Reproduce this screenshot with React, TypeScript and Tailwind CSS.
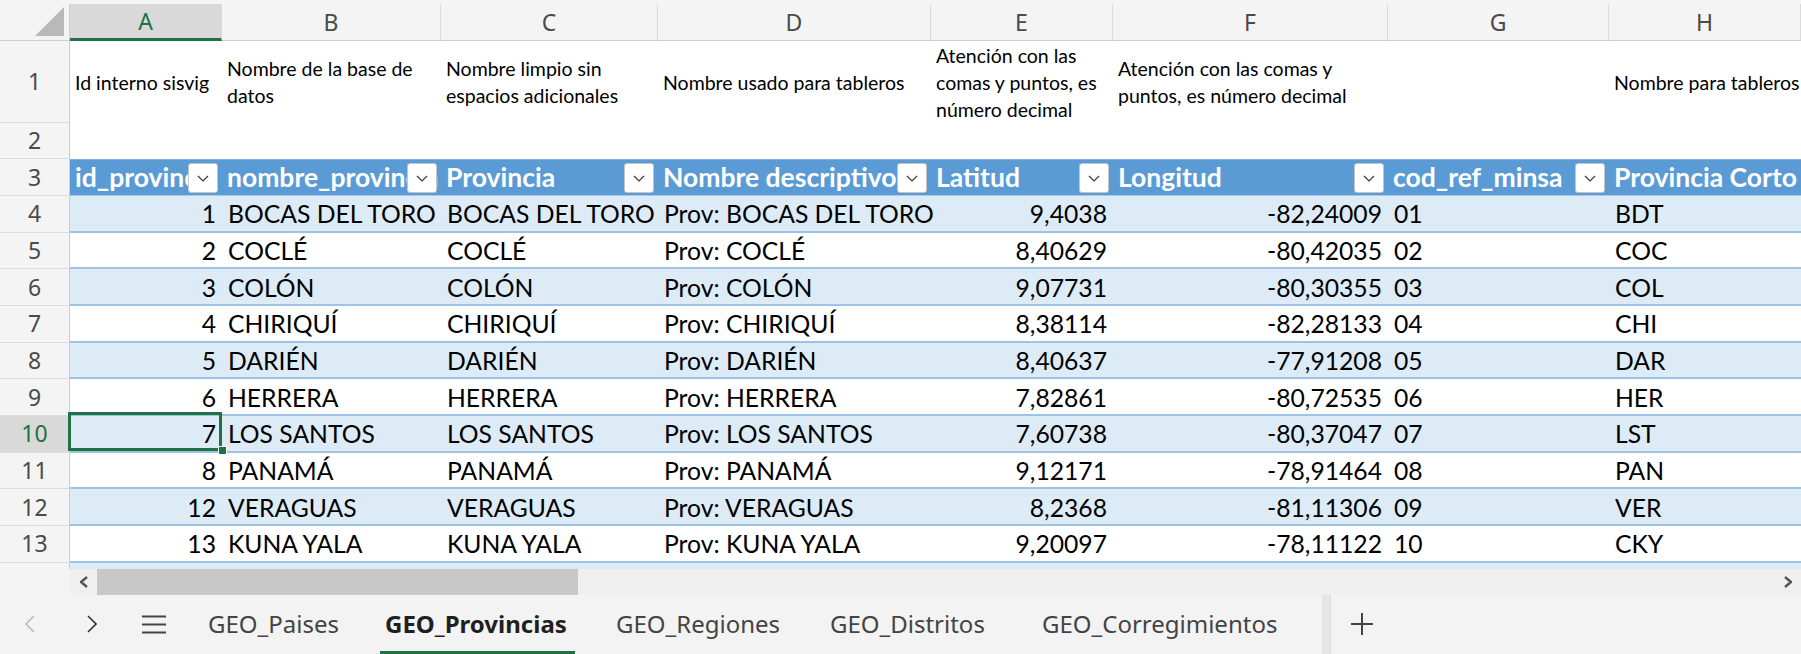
import React from 'react';

const widths = ['w-[152px]', 'w-[219px]', 'w-[217px]', 'w-[273px]', 'w-[182px]', 'w-[275px]', 'w-[221px]', 'w-[192px]'];
const letters = ['A', 'B', 'C', 'D', 'E', 'F', 'G', 'H'];
const rightAligned = [true, false, false, false, true, true, false, false];

const notes: string[][] = [
  ['Id interno sisvig'],
  ['Nombre de la base de', 'datos'],
  ['Nombre limpio sin', 'espacios adicionales'],
  ['Nombre usado para tableros'],
  ['Atención con las', 'comas y puntos, es', 'número decimal'],
  ['Atención con las comas y', 'puntos, es número decimal'],
  [],
  ['Nombre para tableros'],
];

const heads = ['id_provincia', 'nombre_provincia', 'Provincia', 'Nombre descriptivo', 'Latitud', 'Longitud', 'cod_ref_minsa', 'Provincia Corto'];

const rows: (string | number)[][] = [
  [1, 'BOCAS DEL TORO', 'BOCAS DEL TORO', 'Prov: BOCAS DEL TORO', '9,4038', '-82,24009', '01', 'BDT'],
  [2, 'COCLÉ', 'COCLÉ', 'Prov: COCLÉ', '8,40629', '-80,42035', '02', 'COC'],
  [3, 'COLÓN', 'COLÓN', 'Prov: COLÓN', '9,07731', '-80,30355', '03', 'COL'],
  [4, 'CHIRIQUÍ', 'CHIRIQUÍ', 'Prov: CHIRIQUÍ', '8,38114', '-82,28133', '04', 'CHI'],
  [5, 'DARIÉN', 'DARIÉN', 'Prov: DARIÉN', '8,40637', '-77,91208', '05', 'DAR'],
  [6, 'HERRERA', 'HERRERA', 'Prov: HERRERA', '7,82861', '-80,72535', '06', 'HER'],
  [7, 'LOS SANTOS', 'LOS SANTOS', 'Prov: LOS SANTOS', '7,60738', '-80,37047', '07', 'LST'],
  [8, 'PANAMÁ', 'PANAMÁ', 'Prov: PANAMÁ', '9,12171', '-78,91464', '08', 'PAN'],
  [12, 'VERAGUAS', 'VERAGUAS', 'Prov: VERAGUAS', '8,2368', '-81,11306', '09', 'VER'],
  [13, 'KUNA YALA', 'KUNA YALA', 'Prov: KUNA YALA', '9,20097', '-78,11122', '10', 'CKY'],
];

function RowHead({ n, selected }: { n: number; selected?: boolean }) {
  return (
    <div
      className={`h-full w-[70px] shrink-0 flex items-center justify-center border-r border-b border-r-[#cdcdcd] border-b-[#dcdcdc] font-['Noto_Sans',sans-serif] text-[23px] leading-none ${
        selected ? 'bg-[#d9d9d9] text-[#1f7244]' : 'bg-[#f4f4f4] text-[#4a4a4a]'
      }`}
    >
      {n}
    </div>
  );
}

function FilterBtn() {
  return (
    <span className="absolute right-[4px] top-[3px] w-[30px] h-[30px] bg-white border border-[#c4c4c4] rounded-[3px] flex items-center justify-center">
      <svg width="12" height="7" viewBox="0 0 12 7">
        <path d="M1 1l5 5 5-5" fill="none" stroke="#3a3a3a" strokeWidth="1.2" />
      </svg>
    </span>
  );
}

function Chevron({ dir, color, w = 10, h = 18, sw = 1.6 }: { dir: 'l' | 'r'; color: string; w?: number; h?: number; sw?: number }) {
  const d = dir === 'l' ? `M${w - 1} 1L1 ${h / 2}L${w - 1} ${h - 1}` : `M1 1L${w - 1} ${h / 2}L1 ${h - 1}`;
  return (
    <svg width={w} height={h} viewBox={`0 0 ${w} ${h}`}>
      <path d={d} fill="none" stroke={color} strokeWidth={sw} />
    </svg>
  );
}

export default function App() {
  return (
    <div className="w-[1801px] h-[654px] overflow-hidden bg-white flex flex-col font-['Lato',sans-serif] text-black">
      {/* column headers */}
      <div className="h-[41px] shrink-0 flex pt-[4px] bg-[#f4f4f4]">
        <div className="w-[70px] shrink-0 border-r border-b border-[#cdcdcd] flex items-end justify-end pr-[5px] pb-[4px]">
          <svg width="29" height="29" viewBox="0 0 29 29">
            <path d="M29 0V29H0Z" fill="#b9b9b9" />
          </svg>
        </div>
        {letters.map((l, i) => (
          <div
            key={l}
            className={`${widths[i]} shrink-0 flex items-center justify-center border-r border-r-[#dadada] font-['Noto_Sans',sans-serif] text-[23px] leading-none ${
              i === 0
                ? 'bg-[#d9d9d9] text-[#1f7244] border-b-[3px] border-b-[#1f7244]'
                : 'text-[#4a4a4a] border-b border-b-[#cdcdcd]'
            }`}
          >
            {l}
          </div>
        ))}
      </div>

      {/* row 1 notes */}
      <div className="flex shrink-0 h-[82px]">
        <RowHead n={1} />
        {notes.map((lines, i) => (
          <div key={i} className={`${widths[i]} h-full shrink-0 flex flex-col justify-center px-[5px] overflow-hidden whitespace-nowrap text-[19.5px] leading-[27px]`}>
            {lines.map((t) => (
              <span key={t}>{t}</span>
            ))}
          </div>
        ))}
      </div>

      {/* row 2 */}
      <div className="flex shrink-0 h-[36px]">
        <RowHead n={2} />
        <div className="flex-1" />
      </div>

      {/* row 3 table header */}
      <div className="flex shrink-0 h-[37px]">
        <RowHead n={3} />
        <div className="flex flex-1 h-full bg-[#5b9bd5] border-t border-t-[#7fb0de] border-b border-b-[#a8caea]">
          {heads.map((t, i) => (
            <div key={t} className={`${widths[i]} relative shrink-0 flex items-center px-[5px] overflow-hidden whitespace-nowrap text-white font-bold text-[26.5px] leading-none`}>
              {t}
              {i < 7 && <FilterBtn />}
            </div>
          ))}
        </div>
      </div>

      {/* data rows */}
      {rows.map((r, ri) => (
        <div key={ri} className="flex shrink-0 h-[36.67px]">
          <RowHead n={ri + 4} selected={ri === 6} />
          <div className={`flex flex-1 h-full border-b-2 border-b-[#9dc3e6] ${ri % 2 === 0 ? 'bg-[#ddebf7]' : 'bg-white'}`}>
            {r.map((v, ci) => (
              <div
                key={ci}
                className={`${widths[ci]} relative shrink-0 flex items-center pt-[3px] px-[6px] whitespace-nowrap text-[24.7px] leading-none ${
                  rightAligned[ci] ? 'justify-end' : 'justify-start'
                }`}
              >
                {v}
                {ri === 6 && ci === 0 && (
                  <>
                    <span className="absolute left-[-2px] right-0 top-[-4px] bottom-[0px] border-[3px] border-[#1f7244]" />
                    <span className="absolute right-[-5px] bottom-[-4px] w-[9px] h-[9px] bg-[#1f7244] border border-white" />
                  </>
                )}
              </div>
            ))}
          </div>
        </div>
      ))}

      {/* partial row 14 */}
      <div className="flex shrink-0 h-[6px]">
        <div className="w-[70px] shrink-0 bg-[#f4f4f4] border-r border-r-[#cdcdcd]" />
        <div className="flex-1 bg-[#ddebf7]" />
      </div>

      {/* horizontal scrollbar */}
      <div className="flex shrink-0 h-[26px]">
        <div className="w-[70px] shrink-0 bg-[#f3f3f3]" />
        <div className="flex flex-1 bg-[#efefef] items-center">
          <div className="w-[27px] h-full flex items-center justify-center">
            <Chevron dir="l" color="#555" w={8} h={12} sw={2.4} />
          </div>
          <div className="w-[481px] h-full bg-[#c8c8c8]" />
          <div className="flex-1" />
          <div className="w-[26px] h-full flex items-center justify-center">
            <Chevron dir="r" color="#555" w={8} h={12} sw={2.4} />
          </div>
        </div>
      </div>

      {/* sheet tabs */}
      <div className="h-[59px] shrink-0 flex items-stretch bg-[#f3f3f3] font-['Noto_Sans',sans-serif] text-[24px] leading-none text-[#444]">
        <div className="w-[60px] flex items-center justify-center">
          <Chevron dir="l" color="#bdbdbd" />
        </div>
        <div className="w-[64px] flex items-center justify-center">
          <Chevron dir="r" color="#333" />
        </div>
        <div className="w-[60px] flex items-center justify-center">
          <svg width="24" height="19" viewBox="0 0 24 19">
            <path d="M0 1.5H24M0 9.5H24M0 17.5H24" stroke="#444" strokeWidth="2" />
          </svg>
        </div>
        <div className="w-[20px]" />
        <div className="w-[176px] flex items-center pl-[4px]">GEO_Paises</div>
        <div className="w-[232px] relative flex items-center pl-[5px] font-bold text-[#1f1f1f]">
          GEO_Provincias
          <span className="absolute left-0 bottom-0 w-[195px] h-[3px] bg-[#1f7244]" />
        </div>
        <div className="w-[214px] flex items-center pl-[4px]">GEO_Regiones</div>
        <div className="w-[212px] flex items-center pl-[4px]">GEO_Distritos</div>
        <div className="w-[284px] flex items-center pl-[4px]">GEO_Corregimientos</div>
        <div className="w-[9px] bg-[#e6e6e6] border-r border-r-[#dcdcdc]" />
        <div className="w-[62px] flex items-center justify-center">
          <svg width="22" height="22" viewBox="0 0 22 22">
            <path d="M11 0V22M0 11H22" stroke="#444" strokeWidth="2" />
          </svg>
        </div>
        <div className="flex-1" />
      </div>
    </div>
  );
}
